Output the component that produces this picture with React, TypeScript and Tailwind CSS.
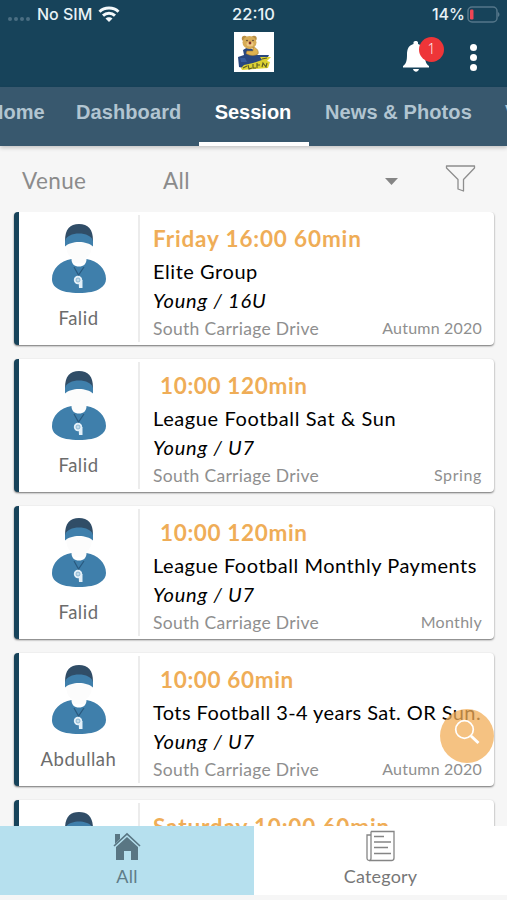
import React from "react";

type Session = {
  coach: string;
  time: string;
  timeClass: string;
  title: string;
  titleClass: string;
  group: string;
  term: string;
  termClass: string;
};

const sessions: Session[] = [
  { coach: "Falid", time: "Friday 16:00 60min", timeClass: "tracking-[0.85px]", title: "Elite Group", titleClass: "tracking-[0.55px]", group: "Young / 16U", term: "Autumn 2020", termClass: "tracking-[0.2px]" },
  { coach: "Falid", time: "10:00 120min", timeClass: "pl-[7px] tracking-[0.65px]", title: "League Football Sat & Sun", titleClass: "tracking-[0.6px]", group: "Young / U7", term: "Spring", termClass: "tracking-[0.6px]" },
  { coach: "Falid", time: "10:00 120min", timeClass: "pl-[7px] tracking-[0.65px]", title: "League Football Monthly Payments", titleClass: "tracking-[0.52px]", group: "Young / U7", term: "Monthly", termClass: "tracking-[0.3px]" },
  { coach: "Abdullah", time: "10:00 60min", timeClass: "pl-[7px] tracking-[0.65px]", title: "Tots Football 3-4 years Sat. OR Sun.", titleClass: "tracking-[0.42px]", group: "Young / U7", term: "Autumn 2020", termClass: "tracking-[0.2px]" },
  { coach: "Falid", time: "Saturday 10:00 60min", timeClass: "tracking-[0.85px]", title: "Elite Group", titleClass: "tracking-[0.55px]", group: "Young / U7", term: "Autumn 2020", termClass: "tracking-[0.2px]" },
];

function CoachIcon() {
  return (
    <svg width="56" height="72" viewBox="0 0 56 72" className="block">
      <path d="M15 20 C15 30 18 33 21 35 V40 H35 V35 C39 32 41 29 41 20Z" fill="#fcfcfc" />
      <path d="M14 18 C14 6 19 1 28 1 C37 1 42 6 42 18Z" fill="#304d67" />
      <path d="M14 18 C16 8 40 8 42 18 V23.500 C36 17.500 20 17.500 14 23.500Z" fill="#3f7fab" />
      <path d="M20.500 36 C9 38 1 46 1 56 C1 60 2.500 63 6.500 65.500 C14 71.500 42 71.500 49 65.500 C53 63 55 60 55 56 C55 46 47 38 35.500 36 C35.500 41 32.500 43.500 28 43.500 C23.500 43.500 20.500 41 20.500 36Z" fill="#3f7fab" />
      <path d="M23 44 L27.500 52 L33 44" fill="none" stroke="#29597e" strokeWidth="1.200" />
      <circle cx="27" cy="57" r="4.200" fill="#e4f0f8" />
      <path d="M27.500 57 H31.500 V65 H28Z" fill="#e4f0f8" />
      <circle cx="27" cy="57" r="2" fill="#c5ddeb" stroke="#72a6c7" strokeWidth=".7" />
    </svg>
  );
}

function Logo() {
  return (
    <svg width="40" height="40" viewBox="0 0 40 40" className="block bg-white">
      <path d="M9 18 L14 15 L20 18 L23 23 L35 23 L32 29 L20 33 L9 36 L5 35 L4 25 L10 23Z" fill="#29477f" />
      <circle cx="10.500" cy="6.500" r="2.700" fill="#b98e42" />
      <circle cx="20" cy="6.500" r="2.700" fill="#b98e42" />
      <ellipse cx="15.500" cy="10.500" rx="7" ry="6.500" fill="#d7ac57" />
      <ellipse cx="16" cy="12" rx="3.500" ry="2.500" fill="#efc985" />
      <circle cx="16" cy="11" r="1.400" fill="#8a3528" />
      <circle cx="13" cy="8.500" r=".8" fill="#55402e" />
      <circle cx="19" cy="8.500" r=".8" fill="#55402e" />
      <path d="M19 15 C23 16 25 19 24 22 C21 24 16 24 12 21.500 L13 19 L19 19Z" fill="#e0b250" stroke="#a37b35" strokeWidth=".6" />
      <path d="M6 26 H11 L13 30 H7Z" fill="#365c9c" />
      <path d="M7 36 L10 33 L19 31 L28 28 L26 25 L37 25 L33 29 L36 30 L34 36 L21 37 L8 38Z" fill="#ddd231" />
      <path d="M9 36 L13 34 M14 33 L15 37 L18 36 M19 32 L19 36 H22 M23 31 V36 M23 33 H26 M28 35 L29 31 L32 35 L33 31 M28 27 L33 26" stroke="#5a5b28" strokeWidth="1.100" fill="none" />
    </svg>
  );
}

function StatusBar() {
  return (
    <div className="flex h-[28px] items-center font-['Inter','Liberation_Sans',sans-serif] text-[16.5px] font-medium text-[#e8f2f6]">
      <div className="flex w-[169px] items-center pl-2">
        <div className="flex gap-[2px] pt-[9px]">
          {[0, 1, 2, 3].map((i) => (
            <i key={i} className="size-1 rounded-full bg-[#4b6e82]" />
          ))}
        </div>
        <span className="ml-[7px] w-[56px] whitespace-nowrap text-[16px]">No SIM</span>
        <svg width="22" height="17" viewBox="0 0 22 17" className="ml-[5px]" fill="none" stroke="#f4f9fb" strokeWidth="3">
          <path d="M1.500 5.800 C6.500 .8 15.500 .8 20.500 5.800" />
          <path d="M5 9.600 C8.400 6.500 13.600 6.500 17 9.600" />
          <path d="M11 16 L7.500 12.400 C9.400 10.700 12.600 10.700 14.500 12.400Z" fill="#f4f9fb" stroke="none" />
        </svg>
      </div>
      <div className="flex-1 text-center">22:10</div>
      <div className="flex w-[169px] items-center justify-end pr-[7px]">
        <span className="mr-[2px] text-[16px]">14%</span>
        <svg width="33" height="17" viewBox="0 0 33 17">
          <rect x="1" y="1" width="29" height="15" rx="4" fill="none" stroke="#55778a" strokeWidth="1.500" />
          <rect x="3" y="3.500" width="3.500" height="10" rx="1.200" fill="#ef4655" />
          <path d="M31 6 C33 7 33 10 31 11Z" fill="#55778a" />
        </svg>
      </div>
    </div>
  );
}

function SessionCard({ s }: { s: Session }) {
  return (
    <article className="flex h-[133px] shrink-0 overflow-hidden rounded-[4px] border-l-[5px] border-[#17435a] bg-white shadow-[0_1px_2px_rgba(0,0,0,0.55)]">
      <div className="my-[3px] flex w-[121px] shrink-0 flex-col items-center border-r-2 border-[#ececec] pt-[8px]">
        <CoachIcon />
        <span className="mt-[9px] text-[18.5px] leading-[28px] tracking-[0.5px] text-[#6c6c6c]">{s.coach}</span>
      </div>
      <div className="min-w-0 flex-1 whitespace-nowrap pl-[13px] pr-3 pt-[10px]">
        <h2 className={`text-[22.5px] font-bold leading-[33px] text-[#efad57] ${s.timeClass}`}>{s.time}</h2>
        <p className={`text-[20px] leading-[32px] text-black ${s.titleClass}`}>{s.title}</p>
        <p className="text-[20px] italic leading-[26px] tracking-[0.8px] text-black">{s.group}</p>
        <div className="flex justify-between">
          <span className="text-[17.5px] leading-[32px] tracking-[0.3px] text-[#8f8f8f]">South Carriage Drive</span>
          <span className={`text-[16px] leading-[29px] text-[#8f8f8f] ${s.termClass}`}>{s.term}</span>
        </div>
      </div>
    </article>
  );
}

export default function App() {
  return (
    <div className="relative flex h-[900px] w-[507px] flex-col overflow-hidden bg-[#f6f6f6] font-['Lato',sans-serif]">
      <header className="h-[87px] shrink-0 bg-[#17435a]">
        <StatusBar />
        <div className="flex h-[59px] items-start pt-[4px]">
          <div className="w-[234px]" />
          <Logo />
          <div className="relative ml-[128px] mt-[8px]">
            <svg width="28" height="32" viewBox="0 0 28 32" fill="white" className="block">
              <path d="M11.500 4 V2.500 C11.500 .5 16 .5 16 2.500 V4 C21 5.500 23 10 23 15 C23 21 24 24 27 26 V27.500 H1 V26 C4 24 5 21 5 15 C5 9 6.500 5.500 11.500 4Z" />
              <path d="M11 29 H17 C16 32.500 12 32.500 11 29Z" />
            </svg>
            <span className="absolute left-[17px] top-[-3px] flex size-[25px] items-center justify-center rounded-full bg-[#ee3538] pb-[2px] font-['Open_Sans',sans-serif] text-[14px] font-light text-white">1</span>
          </div>
          <div className="ml-[40px] mt-[12px] flex flex-col gap-[3px]">
            {[0, 1, 2].map((i) => (
              <i key={i} className="size-[7px] rounded-full bg-white" />
            ))}
          </div>
        </div>
      </header>

      <nav className="z-10 h-[59px] shrink-0 overflow-hidden bg-[#38586e] shadow-[0_2px_4px_rgba(0,0,0,0.2)]">
        <div className="-ml-[11px] flex w-[600px] whitespace-nowrap font-['Liberation_Sans',sans-serif] text-[20px] font-bold leading-[51px] text-[#b2c5d1]">
          <span className="w-[87px] shrink-0">Home</span>
          <span className="w-[123px] shrink-0 tracking-[0.1px]">Dashboard</span>
          <span className="h-[59px] w-[110px] shrink-0 border-b-4 border-white pr-[2px] text-center text-white">Session</span>
          <span className="ml-4 w-[180px] shrink-0 tracking-[0.1px]">News &amp; Photos</span>
          <span>Venue</span>
        </div>
      </nav>

      <div className="flex h-[66px] shrink-0 items-start pl-[22px] pt-[19px] text-[22.5px] leading-[32px] text-[#8b8b8b]">
        <span className="w-[141px] tracking-[0.4px]">Venue</span>
        <span className="w-[222px] tracking-[0.4px]">All</span>
        <svg width="13" height="7" viewBox="0 0 13 7" className="mt-[13px]"><path d="M0 0 H13 L6.500 7Z" fill="#858585" /></svg>
        <svg width="31" height="28" viewBox="0 0 31 28" className="ml-[47px]" fill="none" stroke="#8d8d8d" strokeWidth="1.300" strokeLinejoin="round">
          <path d="M1.500 1 H29.500 V3 L18.500 14.500 V26 L13 24 V14.500 L1.500 3Z" />
        </svg>
      </div>

      <main className="flex min-h-0 flex-1 flex-col gap-[14px] overflow-hidden pl-[14px] pr-[13px]">
        {sessions.map((s, i) => <SessionCard key={i} s={s} />)}
      </main>

      <button className="absolute left-[440px] top-[709px] flex size-[54px] justify-center rounded-full bg-[#f1ae58]/75 pt-[10px]">
        <svg width="26" height="26" viewBox="0 0 26 26" fill="none" stroke="white">
          <circle cx="10.500" cy="10.500" r="8.800" strokeWidth="1.700" />
          <path d="M17 17 L24.500 24" strokeWidth="3" />
        </svg>
      </button>

      <footer className="mb-[5px] flex h-[69px] shrink-0 bg-white text-[18px] leading-[24px] text-[#777]">
        <div className="flex w-[254px] flex-col items-center bg-[#b6e0ee] pt-[6px] text-[#607c87]">
          <svg width="28" height="29" viewBox="0 0 28 29" fill="#597683">
            <path d="M2 2 H7 V7 L2 12Z" />
            <path d="M1 14 L14 2 L27 14" fill="none" stroke="#597683" strokeWidth="1.700" />
            <path d="M3 15 L14 5 L25 15 V28 H18 V19 H11 V28 H3Z" />
          </svg>
          <span className="mt-[3px] tracking-[0.3px]">All</span>
        </div>
        <div className="flex flex-1 flex-col items-center pt-[4px]">
          <svg width="29" height="32" viewBox="0 0 29 32" fill="none" stroke="#858585" strokeWidth="1.300">
            <path d="M5 1.500 H28 V28 Q28 30.500 25.500 30.500 H3.500 Q1 30.500 1 28 V5 H5" />
            <path d="M5 1.500 V28 Q5 30.500 3.500 30.500 M8 6.500 H18 M8 12 H25 M8 17.500 H22 M8 23.500 H25" />
          </svg>
          <span className="mt-[2px] tracking-[0.2px]">Category</span>
        </div>
      </footer>
    </div>
  );
}
